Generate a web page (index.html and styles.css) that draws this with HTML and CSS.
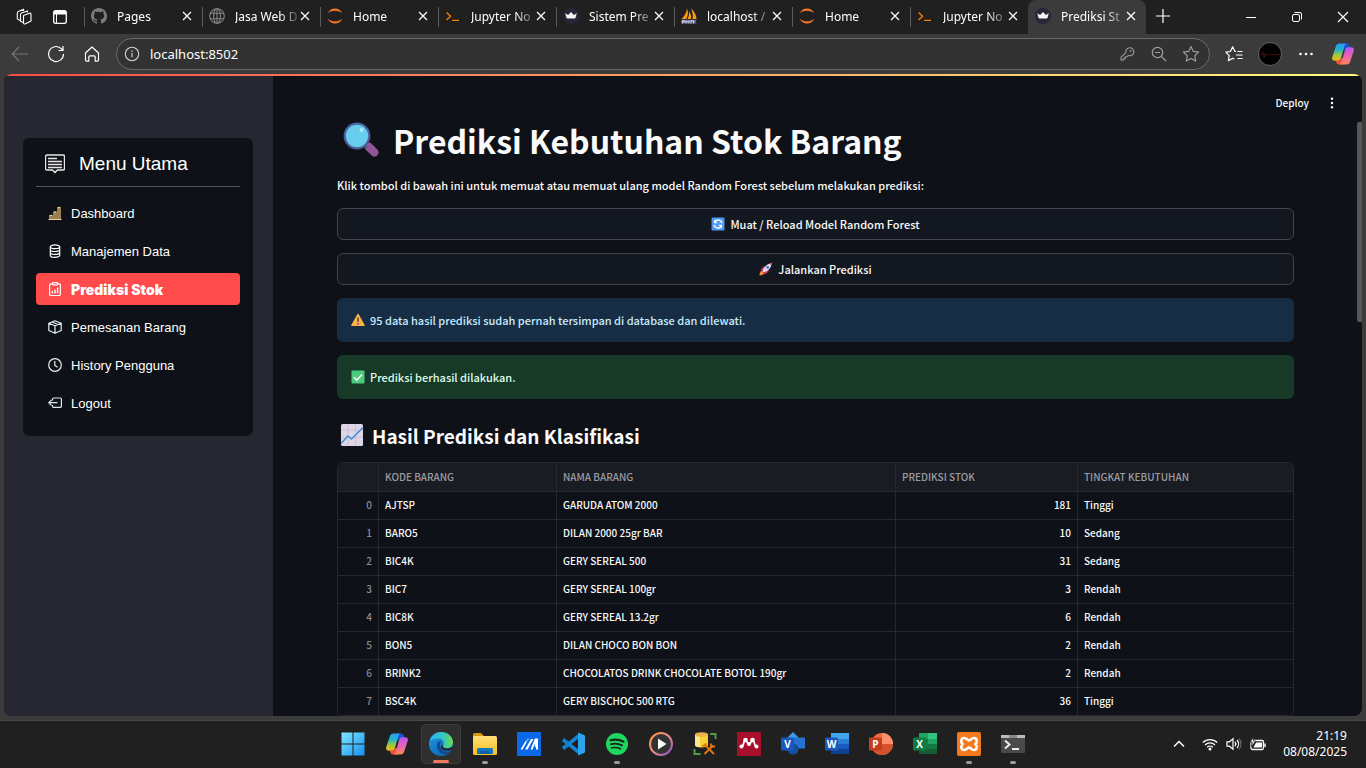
FILE: index.html
```html
<!DOCTYPE html>
<html lang="id">
<head>
<meta charset="utf-8">
<title>Prediksi Stok</title>
<link rel="stylesheet" href="styles.css">
</head>
<body>
<svg class="defs" aria-hidden="true">
  <defs>
    <linearGradient id="cpA" x1="0" y1="0" x2="0" y2="1"><stop offset="0" stop-color="#2a9df4"/><stop offset=".35" stop-color="#1fb5c9"/><stop offset=".7" stop-color="#a6c936"/><stop offset="1" stop-color="#f5b31b"/></linearGradient>
    <linearGradient id="cpB" x1="0" y1="0" x2="0" y2="1"><stop offset="0" stop-color="#b45cf0"/><stop offset=".5" stop-color="#e961b4"/><stop offset="1" stop-color="#fb8a53"/></linearGradient>
    <linearGradient id="win" x1="0" y1="0" x2="1" y2="1"><stop offset="0" stop-color="#7ee8ff"/><stop offset="1" stop-color="#1590f0"/></linearGradient>
    <linearGradient id="edA" x1="0" y1="0" x2="1" y2="0"><stop offset="0" stop-color="#2cb5f0"/><stop offset=".6" stop-color="#35c8c0"/><stop offset="1" stop-color="#6edb48"/></linearGradient>
    <linearGradient id="edB" x1="0" y1="0" x2="1" y2="1"><stop offset="0" stop-color="#1c9be8"/><stop offset="1" stop-color="#0c59a4"/></linearGradient>
    <linearGradient id="mp" x1="0" y1="0" x2="1" y2="1"><stop offset="0" stop-color="#ff9a3c"/><stop offset=".5" stop-color="#e88a86"/><stop offset="1" stop-color="#8a4fc4"/></linearGradient>
    <linearGradient id="fold" x1="0" y1="0" x2="0" y2="1"><stop offset="0" stop-color="#ffe07a"/><stop offset="1" stop-color="#fbbc1d"/></linearGradient>
  </defs>
  <symbol id="github" viewBox="0 0 16 16"><path fill="#7b7b7b" d="M8 0C3.58 0 0 3.58 0 8c0 3.54 2.29 6.53 5.47 7.59.4.07.55-.17.55-.38 0-.19-.01-.82-.01-1.49-2.01.37-2.53-.49-2.69-.94-.09-.23-.48-.94-.82-1.13-.28-.15-.68-.52-.01-.53.63-.01 1.08.58 1.23.82.72 1.21 1.87.87 2.33.66.07-.52.28-.87.51-1.07-1.78-.2-3.64-.89-3.64-3.95 0-.87.31-1.59.82-2.15-.08-.2-.36-1.02.08-2.12 0 0 .67-.21 2.2.82a7.6 7.6 0 0 1 4 0c1.53-1.04 2.2-.82 2.2-.82.44 1.1.16 1.92.08 2.12.51.56.82 1.27.82 2.15 0 3.07-1.87 3.75-3.65 3.95.29.25.54.73.54 1.48 0 1.07-.01 1.93-.01 2.2 0 .21.15.46.55.38A8 8 0 0 0 16 8c0-4.42-3.58-8-8-8z"/></symbol>
  <symbol id="globe" viewBox="0 0 16 16"><g fill="none" stroke="#858585" stroke-width="1.1"><circle cx="8" cy="8" r="7.3"/><ellipse cx="8" cy="8" rx="3.4" ry="7.3"/><path d="M1.5 5.2h13M1.5 10.8h13M8 .7v14.6"/></g></symbol>
  <symbol id="jupyter" viewBox="0 0 16 16"><path fill="#f37726" d="M.6 5.6C2 2.300 4.700.4 8 .4s6 1.900 7.400 5.200C13.700 3.700 11 2.800 8 2.800S2.300 3.700.6 5.600zM.6 10.400c1.700 1.900 4.400 2.800 7.400 2.800s5.700-.9 7.400-2.800C14 13.700 11.300 15.600 8 15.600S2 13.700.6 10.400z"/></symbol>
  <symbol id="prompt" viewBox="0 0 16 16"><path d="M1.500 4.500l4 3.700-4 3.700M7 12.400h7" fill="none" stroke="#f57c00" stroke-width="1.400"/></symbol>
  <symbol id="crown" viewBox="0 0 16 16"><circle cx="8" cy="8" r="8" fill="#262737"/><path fill="#f4f4f4" d="M2.200 5.200l3 1.800L8 4l2.800 3 3-1.800-1.300 4.600a.8.8 0 0 1-.8.600H4.300a.8.8 0 0 1-.8-.6z"/></symbol>
  <symbol id="pma" viewBox="0 0 16 16"><path fill="#f89c0e" d="M6 .5c1.500 3.500 1.200 7.500-.8 10.500H.5C3.500 8 5.500 4.500 6 .5zM10 .5c3.500 3 5.300 6.500 5.500 10.500h-4C12.300 7.500 11.500 4 10 .5zM8 3c2 3 2.500 5.500 2 8H6.500C7.800 8.500 8.300 6 8 3z"/><path fill="#6c6f9c" d="M.3 11.700h15.400l-1.200 2.300 1 1.500H.3z"/><path stroke="#d9d9e8" stroke-width=".9" fill="none" d="M1.500 15.500v-2.800h1.800v1.400H2M5 15.500v-2.800l1.500 1.500L8 12.700v2.800M10 15.500v-2.800h2.500v2.800"/></symbol>
  <symbol id="x" viewBox="0 0 10 10"><path d="M1 1l8 8M9 1l-8 8" stroke="#fff" stroke-width="1.200" fill="none"/></symbol>
  <symbol id="copilot" viewBox="0 0 24 24"><path fill="#1b4fd0" d="M12 1.500h4c1.600 0 2.500 1 3 2.600l.7 2.400h-3.500c-2 0-2.700 1-3.200 2.700L10 8z"/><path fill="url(#cpA)" d="M14 1.500H8.500C6.300 1.500 5.200 3 4.600 5L1.300 15c-.7 2.300.2 3.700 2.600 3.700H7c1.700 0 2.500-1.200 3-2.900l3-10.300c.6-2 1-4 3-4z"/><path fill="#f0543a" d="M12 22.500H8c-1.600 0-2.300-1-2.800-2.400l-.4-1.400H7c1.700 0 2.700-1.200 3.200-2.900L14 17z"/><path fill="url(#cpB)" d="M10 22.500h5.500c2.200 0 3.300-1.500 3.900-3.500l3.300-10c.7-2.300-.2-3.700-2.600-3.700H17c-1.700 0-2.500 1.200-3 2.900L11 18.500c-.6 2-1 4-3 4z"/></symbol>
</svg>

<header class="tabbar">
  <button class="tool" aria-label="Ruang kerja"><svg width="18" height="18" viewBox="0 0 18 18"><g fill="none" stroke="#fff" stroke-width="1.100" stroke-linejoin="round"><path d="M8.500 7.500l6-2.200a1 1 0 0 1 1.500 1v6.600l-6 3a1 1 0 0 1-1.500-1z"/><path d="M8 14.500l-2.500-1.200V6.500a1.500 1.500 0 0 1 1-1.400l6-2.200V4.500"/><path d="M5 12.500l-2.700-1.600V4.900a1.500 1.500 0 0 1 1-1.400L8.600 1.300V3"/></g></svg></button>
  <button class="tool" aria-label="Menu tab"><svg width="16" height="16" viewBox="0 0 16 16"><rect x="1.700" y="1.700" width="12.600" height="12.600" rx="2" fill="none" stroke="#fff" stroke-width="1.300"/><path fill="#fff" d="M2 2h12v3.500H2z"/><path stroke="#fff" d="M4.500 5v9"/></svg></button>
  <nav class="tabs">
    <div class="tab"><svg class="fav"><use href="#github"/></svg><span>Pages</span><button aria-label="Tutup"><svg><use href="#x"/></svg></button></div>
    <div class="tab"><svg class="fav"><use href="#globe"/></svg><span>Jasa Web D</span><button aria-label="Tutup"><svg><use href="#x"/></svg></button></div>
    <div class="tab"><svg class="fav"><use href="#jupyter"/></svg><span>Home</span><button aria-label="Tutup"><svg><use href="#x"/></svg></button></div>
    <div class="tab"><svg class="fav"><use href="#prompt"/></svg><span>Jupyter No</span><button aria-label="Tutup"><svg><use href="#x"/></svg></button></div>
    <div class="tab"><svg class="fav"><use href="#crown"/></svg><span>Sistem Pre</span><button aria-label="Tutup"><svg><use href="#x"/></svg></button></div>
    <div class="tab"><svg class="fav"><use href="#pma"/></svg><span>localhost /</span><button aria-label="Tutup"><svg><use href="#x"/></svg></button></div>
    <div class="tab"><svg class="fav"><use href="#jupyter"/></svg><span>Home</span><button aria-label="Tutup"><svg><use href="#x"/></svg></button></div>
    <div class="tab"><svg class="fav"><use href="#prompt"/></svg><span>Jupyter No</span><button aria-label="Tutup"><svg><use href="#x"/></svg></button></div>
    <div class="tab active"><svg class="fav"><use href="#crown"/></svg><span>Prediksi St</span><button aria-label="Tutup"><svg><use href="#x"/></svg></button></div>
  </nav>
  <button class="newtab" aria-label="Tab baru"><svg width="14" height="14" viewBox="0 0 14 14"><path d="M7 0v14M0 7h14" stroke="#fff" stroke-width="1.200"/></svg></button>
  <div class="winbtns">
    <button aria-label="Kecilkan"><svg width="12" height="12" viewBox="0 0 12 12"><path d="M1 6.500h10" stroke="#fff"/></svg></button>
    <button aria-label="Pulihkan"><svg width="12" height="12" viewBox="0 0 12 12"><g fill="none" stroke="#fff"><rect x="1.500" y="3.500" width="7" height="7" rx="1.500"/><path d="M3.500 1.500H9a1.500 1.500 0 0 1 1.500 1.500v5.500"/></g></svg></button>
    <button aria-label="Tutup jendela"><svg width="12" height="12" viewBox="0 0 12 12"><path d="M1 1l10 10M11 1L1 11" stroke="#fff" stroke-width="1.200"/></svg></button>
  </div>
</header>

<div class="toolbar">
  <button class="nav" aria-label="Kembali"><svg width="18" height="18" viewBox="0 0 18 18"><path d="M17 9H1.500M8 2L1.200 9 8 16" fill="none" stroke="#777" stroke-width="1.100"/></svg></button>
  <button class="nav" aria-label="Muat ulang"><svg width="18" height="18" viewBox="0 0 18 18"><path d="M16.500 9A7.500 7.500 0 1 1 13.700 3.200L16 5.500M16 1v4.500h-4.500" fill="none" stroke="#fff" stroke-width="1.200"/></svg></button>
  <button class="nav" aria-label="Beranda"><svg width="18" height="18" viewBox="0 0 18 18"><path d="M2.500 8L9 2l6.500 6v7a1.200 1.200 0 0 1-1.200 1.200h-2.100V12a1.200 1.200 0 0 0-1.200-1.200H7A1.200 1.200 0 0 0 5.800 12v4.200H3.700A1.200 1.200 0 0 1 2.500 15z" fill="none" stroke="#fff" stroke-width="1.200" stroke-linejoin="round"/></svg></button>
  <div class="omnibox">
    <svg width="16" height="16" viewBox="0 0 16 16"><circle cx="8" cy="8" r="6.700" fill="none" stroke="#d0d0d0" stroke-width="1.100"/><path d="M8 7v4.200M8 4.500v1.400" stroke="#d0d0d0" stroke-width="1.200"/></svg>
    <input type="text" value="localhost:8502" aria-label="Alamat">
    <button aria-label="Kata sandi"><svg width="16" height="16" viewBox="0 0 16 16"><path d="M10.500 1.800a4 4 0 1 1-1.300 7.600l-1.400 1.400H6.300v1.600H4.800V14H2v-2.600l4.800-4.800a4 4 0 0 1 3.700-4.800z" fill="none" stroke="#9a9a9a" stroke-width="1.100" stroke-linejoin="round"/><circle cx="11.600" cy="4.900" r=".9" fill="#9a9a9a"/></svg></button>
    <button aria-label="Perkecil"><svg width="16" height="16" viewBox="0 0 16 16"><g fill="none" stroke="#a0a0a0" stroke-width="1.200"><circle cx="6.500" cy="6.500" r="5.200"/><path d="M4 6.500h5M10.300 10.300l4.700 4.700"/></g></svg></button>
    <button aria-label="Favorit"><svg width="18" height="18" viewBox="0 0 18 18"><path d="M9 1.500l2.300 4.900 5.300.7-3.900 3.700 1 5.300L9 13.500l-4.700 2.600 1-5.300L1.400 7.100l5.300-.7z" fill="none" stroke="#a0a0a0" stroke-width="1.100" stroke-linejoin="round"/></svg></button>
  </div>
  <button class="nav" aria-label="Daftar favorit"><svg width="18" height="18" viewBox="0 0 18 18"><path d="M11 6.500h-1L7.700 1.800 5.400 6.500.9 7.200l3.300 3.400-.8 5 4.300-2.300 1.500.8M12.500 6.500h5M11 10h6.500M12.500 13.500h5" fill="none" stroke="#fff" stroke-width="1.200" stroke-linejoin="round"/></svg></button>
  <button class="nav" aria-label="Profil"><svg width="24" height="24" viewBox="0 0 24 24"><circle cx="12" cy="12" r="11.500" fill="#000" stroke="#777" stroke-width=".8"/><path d="M1 12.500h3l1-3 1 6 1-4 1 2h1l1-1h13" stroke="#5c0d0d" stroke-width=".7" fill="none"/></svg></button>
  <button class="nav" aria-label="Lainnya"><svg width="16" height="4" viewBox="0 0 16 4"><g fill="#fff"><circle cx="2.500" cy="2" r="1.300"/><circle cx="8" cy="2" r="1.300"/><circle cx="13.500" cy="2" r="1.300"/></g></svg></button>
  <button class="nav" aria-label="Copilot"><svg width="24" height="24"><use href="#copilot"/></svg></button>
</div>

<div class="frame">
<div class="page">
  <aside class="sidebar">
    <nav class="menu">
      <h2><svg width="20" height="20" viewBox="0 0 20 20"><path d="M2 1h16a1.500 1.500 0 0 1 1.500 1.500v12A1.500 1.500 0 0 1 18 16h-5.500L10 18.500 7.500 16H2a1.500 1.500 0 0 1-1.500-1.500v-12A1.500 1.500 0 0 1 2 1z" fill="none" stroke="#e6e6e6" stroke-width="1.400"/><path d="M3 4.500h9M3 7.500h14M3 10.500h14M3 13.500h14" stroke="#e6e6e6" stroke-width="1.400"/></svg>Menu Utama</h2>
      <a href="#"><svg viewBox="0 0 14 14"><g fill="none" stroke="#f5cc7c" stroke-width="1.200"><path d="M.5 13.500h13" stroke="#ddd"/><rect x="2" y="9.500" width="2" height="4"/><rect x="6" y="6" width="2" height="7.500"/><rect x="10" y="1.500" width="2" height="12"/></g></svg>Dashboard</a>
      <a href="#"><svg viewBox="0 0 14 14"><g fill="none" stroke="#fff" stroke-width="1.200"><ellipse cx="7" cy="2.800" rx="4.700" ry="1.900"/><path d="M2.300 2.800v8.600C2.300 12.500 4.400 13.300 7 13.300s4.700-.8 4.700-1.900V2.800M2.300 5.700c0 1 2.100 1.800 4.700 1.800s4.700-.8 4.700-1.800M2.300 8.500c0 1 2.100 1.900 4.700 1.900s4.700-.9 4.700-1.900"/></g></svg>Manajemen Data</a>
      <a href="#" class="on"><svg viewBox="0 0 14 14"><g fill="none" stroke="#fff" stroke-width="1.200"><path d="M4.500 1.800H2.800A1.200 1.200 0 0 0 1.600 3v9.300a1.200 1.200 0 0 0 1.200 1.200h8.400a1.200 1.200 0 0 0 1.200-1.200V3a1.200 1.200 0 0 0-1.200-1.200H9.500"/><rect x="4.500" y=".6" width="5" height="2.200" rx=".6"/><path stroke-width="1.400" d="M4.400 9v2.500M7 7.500v4M9.600 5.500v6"/></g></svg>Prediksi Stok</a>
      <a href="#"><svg viewBox="0 0 14 14"><path d="M7 .8l6.200 2.400v7.300L7 13.200.8 10.500V3.200zM.8 3.200L7 5.800l6.200-2.600M7 5.800v7.400M4 2l6 2.500" fill="none" stroke="#dff3f5" stroke-width="1.200" stroke-linejoin="round"/></svg>Pemesanan Barang</a>
      <a href="#"><svg viewBox="0 0 14 14"><circle cx="7" cy="7" r="6.300" fill="none" stroke="#eee" stroke-width="1.200"/><path d="M6.800 3v4.500l2.800 1.700" fill="none" stroke="#eee" stroke-width="1.200"/></svg>History Pengguna</a>
      <a href="#"><svg viewBox="0 0 14 14"><path d="M4.500 4.500V3.200A1.200 1.200 0 0 1 5.700 2h6.500a1.200 1.200 0 0 1 1.200 1.200v7a1.200 1.200 0 0 1-1.200 1.200H5.700a1.200 1.200 0 0 1-1.200-1.200V9M9.500 6.700H.8M3.500 4L.8 6.700l2.700 2.700" fill="none" stroke="#d8ecef" stroke-width="1.200"/></svg>Logout</a>
    </nav>
  </aside>
  <main class="main">
    <div class="appbar"><button>Deploy</button><button aria-label="Menu"><svg width="4" height="12" viewBox="0 0 4 12"><g fill="#fff"><circle cx="2" cy="1.700" r="1.200"/><circle cx="2" cy="6" r="1.200"/><circle cx="2" cy="10.300" r="1.200"/></g></svg></button></div>
    <div class="content">
      <h1><svg width="36" height="36" viewBox="0 0 36 36"><path d="M22 24l3-3c.8-.8 2-.8 2.800 0l6.500 6.500a4 4 0 0 1-5.700 6L22 27z" fill="#8f5596"/><path d="M20 22l4 4" stroke="#555a7c" stroke-width="2.500"/><circle cx="14" cy="14" r="12.300" fill="#68cdee" stroke="#4c5c96" stroke-width="2.200"/><path d="M3 8a12.500 12.500 0 0 1 22 0" fill="none" stroke="#3f73b8" stroke-width="1"/><circle cx="18.500" cy="8" r="2" fill="#b6e4fa"/></svg>Prediksi Kebutuhan Stok Barang</h1>
      <p class="lead">Klik tombol di bawah ini untuk memuat atau memuat ulang model Random Forest sebelum melakukan prediksi:</p>
      <button class="wide"><svg class="emo" viewBox="0 0 14 14"><rect x=".5" y=".5" width="13" height="13" rx="1.200" fill="#4d9af5"/><path d="M11 6.200A4.100 4.100 0 0 0 4 4.300M3 7.800a4.100 4.100 0 0 0 7 1.900" fill="none" stroke="#fff" stroke-width="1.500"/><path fill="#fff" d="M3 2.500v3.700h3.700zM11 11.500V7.800H7.300z"/></svg>Muat / Reload Model Random Forest</button>
      <button class="wide"><svg class="emo" viewBox="0 0 14 14"><path fill="#f78b3c" d="M.5 13.500c0-2 .4-3.800 2-4.700l2.700 2.700c-.9 1.600-2.700 2-4.700 2z"/><path fill="#e52f5b" d="M1.500 8l3-3.500h2.600L4 9.500zM6 12.500l3.500-3V6.900L4.500 10z"/><path fill="#dcdcf0" d="M3.500 9.200C5 5 8 2 11.500 1.500l1 1C12 6 9 9 4.800 10.500z"/><path fill="#f04b6b" d="M10.500 1.800L13.500.5l-1.300 3z"/><circle cx="8.700" cy="5.300" r="1.400" fill="#4274c9"/></svg>Jalankan Prediksi</button>
      <div class="alert info"><svg class="emo" viewBox="0 0 14 14"><path fill="#fbb04c" d="M7 .8c.3 0 .5.1.7.4l6 10.800c.3.600 0 1-.6 1H.9c-.6 0-.9-.4-.6-1l6-10.800c.2-.3.400-.4.700-.4z"/><path stroke="#4a3b3f" stroke-width="1.400" d="M7 4.500v4.300M7 10v1.500"/></svg>95 data hasil prediksi sudah pernah tersimpan di database dan dilewati.</div>
      <div class="alert success"><svg class="emo" viewBox="0 0 14 14"><rect x=".5" y=".5" width="13" height="13" rx="1" fill="#4ccb7f"/><path d="M3 7.300l2.800 2.900L11 4.500" fill="none" stroke="#fff" stroke-width="1.500"/></svg>Prediksi berhasil dilakukan.</div>
      <h2><svg width="24" height="24" viewBox="0 0 24 24"><rect x="1" y="1" width="22" height="22" rx="1.500" fill="#ded6e6"/><path d="M1 7h22M1 14h22M8 1v22M15.500 1v22" stroke="#c6bcd3" stroke-width=".8"/><path d="M1 20.500l7-7.500 3.500 3L23 4.500" fill="none" stroke="#3a8fd8" stroke-width="1.500"/></svg>Hasil Prediksi dan Klasifikasi</h2>
      <div class="grid">
      <table>
        <colgroup><col class="c0"><col class="c1"><col class="c2"><col class="c3"><col></colgroup>
        <thead><tr><th></th><th>KODE BARANG</th><th>NAMA BARANG</th><th>PREDIKSI STOK</th><th>TINGKAT KEBUTUHAN</th></tr></thead>
        <tbody>
        <tr><td>0</td><td>AJTSP</td><td>GARUDA ATOM 2000</td><td>181</td><td>Tinggi</td></tr>
        <tr><td>1</td><td>BARO5</td><td>DILAN 2000 25gr BAR</td><td>10</td><td>Sedang</td></tr>
        <tr><td>2</td><td>BIC4K</td><td>GERY SEREAL 500</td><td>31</td><td>Sedang</td></tr>
        <tr><td>3</td><td>BIC7</td><td>GERY SEREAL 100gr</td><td>3</td><td>Rendah</td></tr>
        <tr><td>4</td><td>BIC8K</td><td>GERY SEREAL 13.2gr</td><td>6</td><td>Rendah</td></tr>
        <tr><td>5</td><td>BON5</td><td>DILAN CHOCO BON BON</td><td>2</td><td>Rendah</td></tr>
        <tr><td>6</td><td>BRINK2</td><td>CHOCOLATOS DRINK CHOCOLATE BOTOL 190gr</td><td>2</td><td>Rendah</td></tr>
        <tr><td>7</td><td>BSC4K</td><td>GERY BISCHOC 500 RTG</td><td>36</td><td>Tinggi</td></tr>
        </tbody>
      </table>
      </div>
    </div>
  </main>
  <div class="scroll"><div class="thumb"></div></div>
</div>
</div>

<footer class="taskbar">
  <div class="apps">
    <button aria-label="Mulai"><svg viewBox="0 0 24 24"><path fill="url(#win)" d="M.5.5h11v11H.5zM12.500.5h11v11h-11zM.5 12.500h11v11H.5zM12.500 12.500h11v11h-11z"/></svg></button>
    <button aria-label="Copilot"><svg viewBox="0 0 24 24"><use href="#copilot"/></svg></button>
    <button class="cur" aria-label="Edge"><svg viewBox="0 0 24 24"><circle cx="12" cy="12" r="12" fill="url(#edB)"/><path fill="url(#edA)" d="M.6 9.500C1.800 4 6.500 0 12 0c6.600 0 12 4.600 12 10.200 0 3.600-2.600 6-6 6-2.500 0-4.300-1-4.300-2 0-.8 1-1.400 1-3.200 0-2.600-2.500-4.600-6-4.600-4 0-7 1.400-8.100 3.100z"/><path fill="#114a8b" d="M9 10c-2 3-1 8 3 11 3 2 7 1 9.500-1.500C17 21 12 18 11 14c-.3-1.800 0-3 1-4.300-1-.5-2.300-.4-3 .3z"/><path fill="#252525" d="M23.500 17c-3 2.500-9 2-10.800-.8-.8-1.400-.5-3.200 1-4-.3 1.200-.2 2.300 1 3.200 2 1.400 5 1.500 8.800-.4z"/></svg></button>
    <button class="run" aria-label="Explorer"><svg viewBox="0 0 24 24"><path fill="#d9960c" d="M0 2.500A1.500 1.500 0 0 1 1.500 1H8l3 3v4H0z"/><rect y="4" width="24" height="19" rx="1.500" fill="url(#fold)"/><path fill="#1477c4" d="M4 22v-4.500A1.500 1.500 0 0 1 5.500 16h13a1.500 1.500 0 0 1 1.500 1.500V22z"/><path fill="#0e5fa6" d="M7 19h10v3H7z"/></svg></button>
    <button aria-label="MyASUS"><svg viewBox="0 0 24 24"><path fill="#0b68e6" d="M0 0h24v24H0z"/><path fill="#fff" d="M3.500 17.500L8.500 9l1.300 1-4.300 7.500zM8 17.500L14 7h2.500L10.500 17.500zM13.500 17.500L18 6.500h3v11h-2v-3l-1 1v-4l-2.500 6z"/><path fill="#7fb5ff" d="M8.500 9l2-2.500h2L9.800 10z"/></svg></button>
    <button aria-label="VS Code"><svg viewBox="0 0 24 24"><path fill="none" stroke="#1383cf" stroke-width="3.600" stroke-linejoin="round" d="M2 7.500L17.500 20M2 16.500L17.500 4"/><path fill="#2ba3ef" d="M17 .5l6 2.500a1.500 1.500 0 0 1 1 1.500v15a1.500 1.500 0 0 1-1 1.500l-6 2.500z"/></svg></button>
    <button class="run" aria-label="Spotify"><svg viewBox="0 0 24 24"><circle cx="12" cy="12" r="11" fill="#1ed760"/><g fill="none" stroke="#17251b" stroke-linecap="round"><path stroke-width="2.200" d="M5.500 8.300c4.500-1.300 9-.9 13 1.300"/><path stroke-width="1.900" d="M6 12.200c4-1 7.700-.6 11 1.200"/><path stroke-width="1.600" d="M6.500 15.800c3.400-.7 6.300-.4 9 1"/></g></svg></button>
    <button aria-label="Media Player"><svg viewBox="0 0 24 24"><circle cx="12" cy="12" r="11" fill="#333" stroke="url(#mp)" stroke-width="2"/><path fill="#fff" d="M9 6.500l8.500 5.500L9 17.500z"/></svg></button>
    <button aria-label="Database"><svg viewBox="0 0 24 24"><path fill="#f4cf35" d="M2 2h13v11H2z"/><ellipse cx="8.500" cy="13" rx="6.500" ry="2.500" fill="#f4cf35"/><path fill="#fbe88b" d="M2 3h5v12.300c-3 0-5-1-5-2.300z"/><ellipse cx="8.500" cy="2.500" rx="6.500" ry="2.300" fill="#efb052"/><path d="M17 2h5.500v5M1.500 17v5h6" fill="none" stroke="#4d9b4b" stroke-width="2"/><path d="M12 13l9 9M20 13.500L11.500 22M9.500 14.500l4-3M18 11.500v3h4" fill="none" stroke="#e6770b" stroke-width="1.800"/></svg></button>
    <button aria-label="Mendeley"><svg viewBox="0 0 24 24"><path fill="#a90f2b" d="M0 0h24v24H0z"/><g fill="#fff"><circle cx="8.500" cy="8" r="2.300"/><circle cx="15.500" cy="8" r="2.300"/><circle cx="12" cy="12" r="2"/><circle cx="4.500" cy="14.500" r="2"/><circle cx="19.500" cy="14.500" r="2"/></g><path d="M4.500 14.500c3 0 1-5 4-6.500 1.500 1 1.500 4 3.500 4s2-3 3.500-4c3 1.500 1 6.500 4 6.500" stroke="#fff" stroke-width="1.800" fill="none"/></svg></button>
    <button aria-label="Visio"><svg viewBox="0 0 24 24"><path fill="#3b9bea" d="M12 0l6 6-6 6-6-6z"/><path fill="#2673cf" d="M13 5.500h11v11H13z"/><circle cx="12" cy="17" r="5.500" fill="#12509f"/><rect y="5.500" width="13" height="13" rx="1" fill="#1957c0"/><text x="6.500" y="15.500" class="glyph">V</text></svg></button>
    <button aria-label="Word"><svg viewBox="0 0 24 24"><path fill="#41a5ee" d="M6 1h18v6H6z"/><path fill="#2b7cd3" d="M6 7h18v5H6z"/><path fill="#185abd" d="M6 12h18v5H6z"/><path fill="#103f91" d="M6 17h18v5H6z"/><rect y="5.500" width="13" height="13" rx="1" fill="#185abd"/><text x="6.500" y="15.500" class="glyph">W</text></svg></button>
    <button aria-label="PowerPoint"><svg viewBox="0 0 24 24"><circle cx="13" cy="12" r="11" fill="#ed6c47"/><path fill="#ff8f6b" d="M13 1a11 11 0 0 1 11 11H13z"/><path fill="#d35230" d="M2 12h22a11 11 0 0 1-22 0z"/><rect y="5.500" width="13" height="13" rx="1" fill="#c43e1c"/><text x="6.500" y="15.500" class="glyph">P</text></svg></button>
    <button aria-label="Excel"><svg viewBox="0 0 24 24"><path fill="#21a366" d="M6 1h9v6H6z"/><path fill="#33c481" d="M15 1h9v6h-9z"/><path fill="#107c41" d="M6 7h9v10H6z"/><path fill="#21a366" d="M15 7h9v5h-9z"/><path fill="#107c41" d="M15 12h9v5h-9z"/><path fill="#185c37" d="M6 17h18v5H6z"/><rect y="5.500" width="13" height="13" rx="1" fill="#107c41"/><text x="6.500" y="15.500" class="glyph">X</text></svg></button>
    <button class="run" aria-label="XAMPP"><svg viewBox="0 0 24 24"><rect width="24" height="24" rx="2" fill="#f4791f"/><path d="M7 6c3 0 3 2.500 5 2.500S14 6 17 6s3.500 4 1.500 6c2 2 1.500 6-1.500 6s-3-2.500-5-2.500S10 18 7 18s-3.500-4-1.500-6C3.500 10 4 6 7 6z" fill="none" stroke="#fff" stroke-width="2.600"/></svg></button>
    <button class="run" aria-label="Terminal"><svg viewBox="0 0 24 24"><rect y="3" width="24" height="18" rx="1" fill="#4a4a4a"/><path fill="#bcbcbc" d="M0 3h24v3H0z"/><path fill="#8a8a8a" d="M8 3h8v3H8z"/><path d="M4 8.500l4.500 4L4 16.500" fill="none" stroke="#eee" stroke-width="2"/><path d="M11 17h7" stroke="#fff" stroke-width="1.800"/></svg></button>
  </div>
  <div class="tray">
    <svg width="12" height="8" viewBox="0 0 12 8"><path d="M1 6.500l5-5 5 5" fill="none" stroke="#fff" stroke-width="1.500"/></svg>
    <div class="status">
    <svg width="16" height="14" viewBox="0 0 16 14"><g fill="none" stroke="#fff" stroke-width="1.300"><path d="M.8 5.500a10.300 10.300 0 0 1 14.400 0M3 8a7 7 0 0 1 10 0M5.200 10.300a4 4 0 0 1 5.600 0"/></g><circle cx="8" cy="12" r="1.500" fill="#fff"/></svg>
    <svg width="16" height="14" viewBox="0 0 16 14"><g fill="none" stroke="#fff" stroke-width="1.200"><path d="M1 4.800h2.500L7 1.800v10.400L3.500 9.200H1z"/><path d="M9 4.800a3.500 3.500 0 0 1 0 4.400M11 3a6 6 0 0 1 0 8"/><path d="M13 1.500a8.500 8.500 0 0 1 0 11" stroke="#666"/></g></svg>
    <svg width="16" height="14" viewBox="0 0 16 14"><rect x="1" y="3.500" width="12.500" height="9" rx="1.500" fill="none" stroke="#fff" stroke-width="1.300"/><path fill="#fff" d="M6 5.500h6v5H3.500zM14.300 6.500h1.400V10h-1.400z"/><path fill="#fff" stroke="#202020" stroke-width=".8" d="M3.500 0L.2 5h2L1.500 9.500 5.700 4H3.300z"/></svg>
    </div>
    <div class="clock"><time>21:19</time><time>08/08/2025</time></div>
  </div>
</footer>
</body>
</html>
```
FILE: styles.css
```css
* { box-sizing: border-box; }
body {
  margin: 0;
  height: 100vh;
  display: flex;
  flex-direction: column;
  overflow: hidden;
  background: #3b3b3b;
  color: #fff;
  font-family: "Noto Sans", "Open Sans", sans-serif;
  font-size: 12px;
}
button {
  font: inherit;
  color: inherit;
  background: none;
  border: 0;
  padding: 0;
  display: flex;
  align-items: center;
  justify-content: center;
}
svg { display: block; flex: none; }
.defs { position: absolute; width: 0; height: 0; }

/* Tab strip */
.tabbar {
  flex: none;
  height: 34px;
  background: #202020;
  display: flex;
  padding-left: 6px;
}
.tool { width: 36px; }
.tabs { display: flex; margin-left: 6px; }
.tab {
  width: 118px;
  display: flex;
  align-items: center;
  padding: 0 8px 2px 6px;
  position: relative;
  border-left: 1px solid #202020;
}
.tab::before {
  content: "";
  position: absolute;
  left: -1px;
  top: 7px;
  width: 1px;
  height: 20px;
  background: #5a5a5a;
}
.tab.active {
  background: #3b3b3b;
  border-color: #3b3b3b;
  border-radius: 8px 8px 0 0;
}
.tab.active::before { display: none; }
.fav { width: 16px; height: 16px; }
.tab span {
  flex: 1;
  min-width: 0;
  margin-left: 10px;
  white-space: nowrap;
  mask-image: linear-gradient(90deg, #000 70%, #0003);
}
.tab button { width: 14px; height: 16px; }
.tab button svg { width: 10px; height: 10px; }
.newtab { width: 34px; padding-bottom: 3px; }
.winbtns { margin-left: auto; display: flex; }
.winbtns button { width: 46px; }

/* Address bar */
.toolbar {
  flex: none;
  height: 40px;
  display: flex;
  align-items: center;
  padding: 0 4px 0 2px;
}
.nav { width: 36px; height: 32px; }
.toolbar > .nav:last-child { width: 38px; }
.omnibox {
  flex: 1;
  height: 32px;
  margin: 0 6px;
  padding: 0 6px 0 7px;
  border: 1px solid #6a6a6a;
  border-radius: 16px;
  background: #323232;
  display: flex;
  align-items: center;
}
.omnibox input {
  flex: 1;
  min-width: 0;
  margin-left: 10px;
  padding: 0;
  border: 0;
  outline: 0;
  background: none;
  color: #fff;
  font: 13px "Noto Sans", sans-serif;
}
.omnibox button { width: 32px; }
.omnibox button:last-child { width: 24px; margin-left: 4px; }

/* Web page */
.frame { flex: 1; min-height: 0; padding: 0 4px 4px; display: flex; }
.page {
  flex: 1;
  display: grid;
  grid-template: 2px minmax(0, 1fr) / 269px minmax(0, 1fr) 5px;
  background: #0e1117;
  border-radius: 8px;
  overflow: hidden;
}
.page::before {
  content: "";
  grid-column: 1 / -1;
  background: linear-gradient(90deg, #ff4b4b, #fffd80);
}
.sidebar { background: #262730; padding: 62px 20px 0 19px; }
.menu {
  background: #0e1117;
  border-radius: 6px;
  padding: 8px 13px 17px;
  display: flex;
  flex-direction: column;
  gap: 6px;
  font-family: "Liberation Sans", Arial, sans-serif;
}
.menu h2 {
  margin: 0 0 4px;
  height: 41px;
  padding: 0 0 4px 9px;
  display: flex;
  align-items: center;
  gap: 14px;
  border-bottom: 1px solid #55575c;
  font-size: 19px;
  font-weight: 400;
}
.menu a {
  height: 32px;
  padding: 0 12px;
  display: flex;
  align-items: center;
  gap: 9px;
  border-radius: 4px;
  color: #fff;
  font-size: 13px;
  text-decoration: none;
}
.menu a svg { width: 14px; height: 14px; }
.menu .on {
  background: #ff4b4b;
  font-family: Inter, sans-serif;
  font-size: 14px;
  font-weight: 900;
}
.main {
  min-width: 0;
  overflow: hidden;
  font-family: "Noto Sans CJK SC", "Noto Sans", sans-serif;
  font-size: 11px;
  font-weight: 500;
  color: #fafafa;
}
.appbar {
  height: 45px;
  padding: 8px 23px 0 0;
  display: flex;
  justify-content: flex-end;
  align-items: center;
  gap: 21px;
  font-size: 10px;
}
.content {
  padding: 0 63px 0 64px;
  display: flex;
  flex-direction: column;
}
h1, .content h2 {
  margin: 0;
  display: flex;
  align-items: center;
}
h1 {
  height: 40px;
  padding: 0 0 3px 6px;
  gap: 14px;
  font-size: 32px;
  font-weight: 700;
  line-height: 36px;
}
h1 svg { align-self: flex-end; }
.lead { margin: 14px 0 13px; line-height: 20px; }
.wide {
  height: 32px;
  margin-bottom: 13px;
  gap: 5px;
  border: 1px solid #41444c;
  border-radius: 6px;
  background: #13171f;
}
.emo { width: 14px; height: 14px; }
.alert {
  height: 44px;
  margin-bottom: 13px;
  padding: 0 14px;
  display: flex;
  align-items: center;
  gap: 5px;
  border-radius: 6px;
}
.info { background: #172d43; color: #c7ebff; }
.success { background: #173928; color: #dffde9; }
.content h2 {
  height: 50px;
  padding: 0 0 4px 3px;
  gap: 8px;
  font-size: 19px;
  font-weight: 700;
}
.grid {
  border: 1px solid #26282e;
  border-radius: 6px;
  overflow: hidden;
}
table {
  width: 100%;
  table-layout: fixed;
  border-collapse: separate;
  border-spacing: 0;
  font-size: 10px;
}
.c0 { width: 41px; }
.c1 { width: 178px; }
.c2 { width: 339px; }
.c3 { width: 182px; }
th, td {
  height: 28px;
  padding: 0 6px;
  border-right: 1px solid #26282e;
  border-bottom: 1px solid #26282e;
  line-height: 16px;
  text-align: left;
  white-space: nowrap;
}
th { height: 29px; background: #1a1c24; color: #9b9ca1; font-weight: 500; }
td { padding-bottom: 1px; }
th:last-child, td:last-child { border-right: 0; }
td:first-child { color: #8b8c91; text-align: right; }
td:nth-child(4) { text-align: right; }
.scroll { padding-top: 46px; }
.thumb { height: 200px; background: #55575b; border-radius: 2px 0 0 2px; }

/* Taskbar */
.taskbar {
  flex: none;
  height: 48px;
  padding-bottom: 2px;
  background: #202020;
  border-top: 1px solid #484848;
  display: grid;
  grid-template-columns: 1fr auto 1fr;
  align-items: center;
}
.apps { grid-column: 2; display: flex; gap: 4px; }
.apps button { width: 40px; height: 40px; position: relative; }
.apps svg { width: 24px; height: 24px; }
.apps .cur { background: #2f2f2f; border: 1px solid #3c3c3c; border-radius: 4px; }
.run::after, .cur::after {
  content: "";
  position: absolute;
  left: 17px;
  bottom: 0;
  width: 6px;
  height: 3px;
  border-radius: 2px;
  background: #9a9a9a;
}
.cur::after { left: 11px; width: 16px; background: #f2795f; }
.glyph { font: 700 10px "Open Sans", sans-serif; fill: #fff; text-anchor: middle; }
.tray {
  justify-self: end;
  display: flex;
  align-items: center;
  gap: 17px;
  padding-right: 19px;
}
.status { display: flex; gap: 8px; }
.clock {
  display: flex;
  flex-direction: column;
  text-align: right;
  font-size: 12px;
  line-height: 16px;
}
```
